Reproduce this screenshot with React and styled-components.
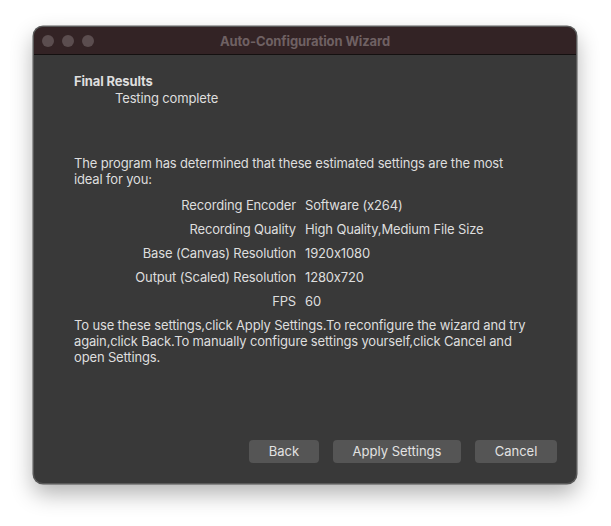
import React from 'react';
import styled, {createGlobalStyle} from 'styled-components';

const GlobalStyle = createGlobalStyle`
  html, body {
    margin: 0;
    padding: 0;
    background: #ffffff;
  }
  body {
    font-family: Inter, "Noto Sans", "Liberation Sans", sans-serif;
    font-feature-settings: "calt" 0;
    -webkit-font-smoothing: antialiased;
  }
`;

const Page = styled.div`
  width: 611px;
  height: 526px;
  padding: 26px 34px 0 33px;
  box-sizing: border-box;
`;

const Window = styled.div`
  width: 544px;
  height: 458px;
  border-radius: 10px;
  background: #393939;
  border: 1px solid #5a5a5a;
  box-sizing: border-box;
  overflow: hidden;
  display: flex;
  flex-direction: column;
  box-shadow: 0 10px 22px rgba(0, 0, 0, 0.3), 0 0 0 0.5px rgba(0, 0, 0, 0.6);
`;

const TitleBar = styled.div`
  height: 27px;
  flex: none;
  background: #332325;
  border-bottom: 1px solid #141010;
  display: flex;
  align-items: center;
  position: relative;
  padding-left: 8px;
  gap: 8px;
`;

const Light = styled.span`
  width: 12px;
  height: 12px;
  border-radius: 50%;
  background: #5b4d4f;
`;

const Title = styled.div`
  position: absolute;
  left: 0;
  right: 0;
  text-align: center;
  font-size: 13px;
  font-weight: 700;
  color: #6f6163;
  letter-spacing: -0.1px;
  pointer-events: none;
`;

const Body = styled.div`
  flex: 1;
  display: flex;
  flex-direction: column;
  padding: 18px 19px 20px 40px;
  color: #dedede;
  font-size: 13px;
  line-height: 16px;
  letter-spacing: -0.15px;
`;

const Heading = styled.div`
  font-weight: 700;
`;

const Sub = styled.div`
  padding-left: 41px;
  margin-top: 1px;
`;

const Para = styled.p`
  margin: ${p => p.$top || 0}px 0 0;
  max-width: 460px;
`;

const Grid = styled.div`
  display: grid;
  grid-template-columns: 222px auto;
  column-gap: 9px;
  row-gap: 8px;
  margin-top: 10px;
`;

const Label = styled.div`
  text-align: right;
`;

const Buttons = styled.div`
  margin-top: auto;
  display: flex;
  justify-content: flex-end;
  gap: 14px;
`;

const Button = styled.button`
  height: 23px;
  width: ${p => p.$w}px;
  border: none;
  border-radius: 4px;
  background: #555555;
  color: #e2e2e2;
  font: inherit;
  font-size: 13px;
  padding: 0 0 1px;
  cursor: pointer;
`;

const rows = [
  ['Recording Encoder', 'Software (x264)'],
  ['Recording Quality', 'High Quality,Medium File Size'],
  ['Base (Canvas) Resolution', '1920x1080'],
  ['Output (Scaled) Resolution', '1280x720'],
  ['FPS', '60'],
];

const App = () => (
  <Page>
    <GlobalStyle />
    <Window>
      <TitleBar>
        <Light />
        <Light />
        <Light />
        <Title>Auto-Configuration Wizard</Title>
      </TitleBar>
      <Body>
        <Heading>Final Results</Heading>
        <Sub>Testing complete</Sub>
        <Para $top={49}>
          The program has determined that these estimated settings are the most
          ideal for you:
        </Para>
        <Grid>
          {rows.map(([k, v]) => (
            <React.Fragment key={k}>
              <Label>{k}</Label>
              <div>{v}</div>
            </React.Fragment>
          ))}
        </Grid>
        <Para $top={8}>
          To use these settings,click Apply Settings.To reconfigure the wizard
          and try again,click Back.To manually configure settings
          yourself,click Cancel and open Settings.
        </Para>
        <Buttons>
          <Button $w={70}>Back</Button>
          <Button $w={128}>Apply Settings</Button>
          <Button $w={82}>Cancel</Button>
        </Buttons>
      </Body>
    </Window>
  </Page>
);

export default App;
